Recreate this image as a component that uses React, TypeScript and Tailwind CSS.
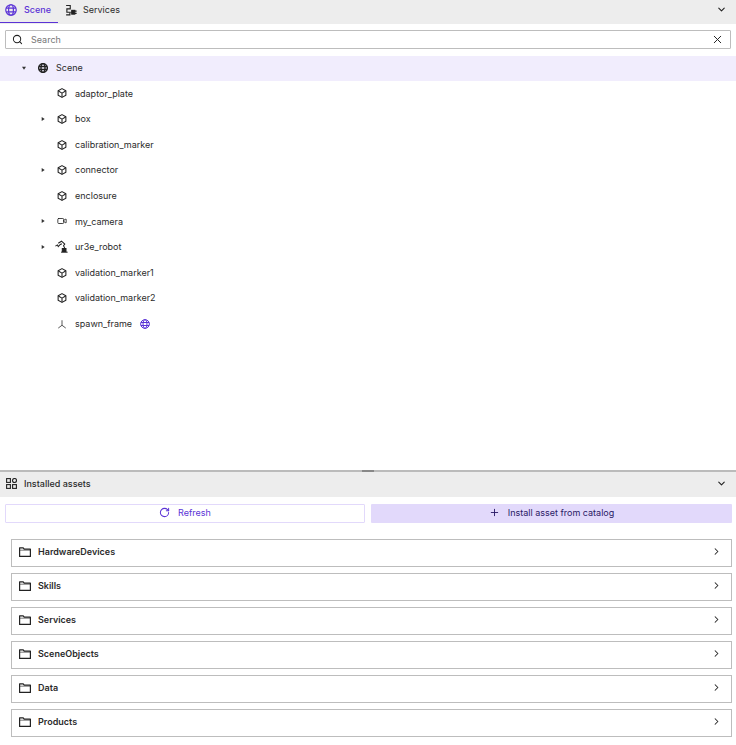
import { ChevronDown, ChevronRight, Search, X, Video, RotateCw, Plus } from "lucide-react";

type TreeRow = {
  label: string;
  icon: "box" | "camera" | "robot" | "frame";
  caret?: boolean;
  globe?: boolean;
};

const rows: TreeRow[] = [
  { label: "adaptor_plate", icon: "box" },
  { label: "box", icon: "box", caret: true },
  { label: "calibration_marker", icon: "box" },
  { label: "connector", icon: "box", caret: true },
  { label: "enclosure", icon: "box" },
  { label: "my_camera", icon: "camera", caret: true },
  { label: "ur3e_robot", icon: "robot", caret: true },
  { label: "validation_marker1", icon: "box" },
  { label: "validation_marker2", icon: "box" },
  { label: "spawn_frame", icon: "frame", globe: true },
];

const folders = ["HardwareDevices", "Skills", "Services", "SceneObjects", "Data", "Products"];

function GlobeIcon({ className, heavy }: { className?: string; heavy?: boolean }) {
  return (
    <svg viewBox="0 0 16 16" fill="none" stroke="currentColor" strokeWidth={heavy ? 2.2 : 1.6} className={className}>
      <circle cx="8" cy="8" r="7" />
      <ellipse cx="8" cy="8" rx="3.2" ry="7" />
      <path d="M1.5 5.6h13M1.5 10.4h13" />
    </svg>
  );
}

function BoxIcon() {
  return (
    <svg viewBox="0 0 16 16" fill="none" stroke="#222" strokeWidth="1.7" strokeLinejoin="round" className="h-[10px] w-[10px]">
      <path d="M8 1l6.2 3.5v7L8 15l-6.2-3.5v-7z" />
      <path d="M2.2 4.8L8 8.2l5.8-3.4M8 8.2V14.6" />
    </svg>
  );
}

function ServicesIcon() {
  return (
    <svg viewBox="0 0 16 16" fill="none" stroke="#222" strokeWidth="1.5" className="h-[12px] w-[12px]">
      <path d="M1.5 2h5.5v4.5H2.5V11h4" />
      <path d="M1.5 14.5h5V11" />
      <rect x="9" y="8.5" width="4" height="5" fill="#222" />
      <path d="M13 9.5h2.5M13 12.5h2.5M9 11H7" />
    </svg>
  );
}

function RobotIcon() {
  return (
    <svg viewBox="0 0 16 16" fill="none" stroke="#222" strokeWidth="1.3" className="ml-[-2px] h-[13px] w-[13px] shrink-0">
      <path d="M0.5 7.5l2.5-1.5 1 2 2.5-2.5 2-1" />
      <path d="M4 4l4-2.5 4 3.5-1.5 2 1.5 3" />
      <path d="M9 10.5h4.5V14H9z" fill="#222" />
      <path d="M7.5 15h8" />
    </svg>
  );
}

function FrameIcon() {
  return (
    <svg viewBox="0 0 16 16" fill="none" stroke="#333" strokeWidth="1.3" className="h-[10px] w-[10px]">
      <path d="M8 2v8M8 10l-6 4.5M8 10l6 4.5" />
    </svg>
  );
}

function AssetsIcon() {
  return (
    <svg viewBox="0 0 11 11" fill="none" stroke="#222" strokeWidth="1.1" className="h-[11px] w-[11px]">
      <rect x="0.6" y="0.6" width="3.8" height="3.8" />
      <circle cx="8.5" cy="2.5" r="2" />
      <rect x="0.6" y="6.6" width="3.8" height="3.8" />
      <rect x="6.6" y="6.6" width="3.8" height="3.8" />
    </svg>
  );
}

function FolderIcon() {
  return (
    <svg viewBox="0 0 12 10" fill="none" stroke="#222" strokeWidth="1.2" className="h-[10px] w-[12px]">
      <path d="M0.6 9.4V0.8h3.6l1 1.4h6.2v7.2z" strokeLinejoin="round" />
      <path d="M0.6 3.2h10.8" strokeWidth="0.6" />
    </svg>
  );
}

function RowIcon({ kind }: { kind: TreeRow["icon"] }) {
  if (kind === "camera") return <Video size={10} strokeWidth={2} color="#222" />;
  if (kind === "robot") return <RobotIcon />;
  if (kind === "frame") return <FrameIcon />;
  return <BoxIcon />;
}

function Caret({ open }: { open?: boolean }) {
  return (
    <svg viewBox="0 0 6 6" className="h-[4px] w-[4px] text-[#333]" fill="currentColor">
      {open ? <path d="M0 1h6L3 5.5z" /> : <path d="M1 0v6l4.5-3z" />}
    </svg>
  );
}

export default function App() {
  return (
    <div
      className="flex h-[745px] w-[736px] flex-col overflow-hidden bg-white text-[9px] text-[#2b2b2b]"
      style={{ fontFamily: "Inter, 'Noto Sans', sans-serif" }}
    >
      <div className="flex h-[24px] shrink-0 items-stretch bg-[#ededed] pb-[1px]">
        <div className="flex w-[58px] items-center gap-[7px] border-b-[1.5px] border-[#5b33d6] pb-[2px] pl-[5px] font-medium text-[#5b33d6]">
          <GlobeIcon className="h-[12px] w-[12px]" />
          <span>Scene</span>
        </div>
        <div className="ml-[7px] flex items-center gap-[6px] pb-[3px]">
          <ServicesIcon />
          <span>Services</span>
        </div>
        <div className="ml-auto flex items-center pb-[4px] pr-[9px]">
          <ChevronDown size={11} strokeWidth={2.4} color="#222" />
        </div>
      </div>

      <div className="h-[446px] shrink-0">
        <div className="px-[5px] pt-[6px]">
          <div className="flex h-[19px] items-center rounded-[1px] border border-[#bdbdbd] pl-[6px] pr-[6px]">
            <Search size={11} strokeWidth={2.2} color="#222" />
            <span className="ml-[8px] text-[#777]">Search</span>
            <X size={13} strokeWidth={1.8} color="#222" className="ml-auto" />
          </div>
        </div>

        <div className="mt-[7px] flex h-[25px] items-center bg-[#f1edfd] pb-[1px]">
          <div className="flex w-[38px] justify-end pr-[12px]">
            <Caret open />
          </div>
          <GlobeIcon heavy className="h-[10px] w-[10px] text-[#222]" />
          <span className="ml-[8px]">Scene</span>
        </div>

        <div className="pt-[0.6px]">
          {rows.map((row) => (
            <div key={row.label} className="flex h-[25.6px] items-center pb-[2px]">
              <div className="flex w-[57px] justify-end pr-[12px]">{row.caret && <Caret />}</div>
              <div className="flex w-[10px] justify-center">
                <RowIcon kind={row.icon} />
              </div>
              <span className="ml-[8px]">{row.label}</span>
              {row.globe && <GlobeIcon className="ml-[8px] h-[10px] w-[10px] text-[#5b33d6]" />}
            </div>
          ))}
        </div>
      </div>

      <div className="relative h-[2px] shrink-0 bg-[#bbbbbb]">
        <div className="absolute left-[362px] top-0 h-[2px] w-[12px] bg-[#888888]" />
      </div>

      <div className="flex h-[25px] shrink-0 items-center bg-[#ededed] pb-[2px] pl-[6px] pr-[9px]">
        <AssetsIcon />
        <span className="ml-[7px] font-medium">Installed assets</span>
        <ChevronDown size={11} strokeWidth={2.4} color="#222" className="ml-auto" />
      </div>

      <div className="flex gap-[6px] pl-[5px] pr-[4px] pt-[7px]">
        <div className="flex h-[19px] w-[360px] items-center justify-center gap-[8px] rounded-[1px] border border-[#e2d9fb] pb-[2px] text-[#5b33d6]">
          <RotateCw size={11} strokeWidth={2.2} />
          <span>Refresh</span>
        </div>
        <div className="flex h-[19px] w-[361px] items-center justify-center gap-[8px] rounded-[1px] bg-[#e2d9fb] pb-[2px] text-[#2a1a66]">
          <Plus size={11} strokeWidth={2} />
          <span>Install asset from catalog</span>
        </div>
      </div>

      <div className="flex flex-col gap-[6px] pl-[11px] pr-[4px] pt-[16px]">
        {folders.map((name) => (
          <div key={name} className="flex h-[28px] items-center border border-[#bdbdbd] pb-[3px] pl-[7px] pr-[9px]">
            <FolderIcon />
            <span className="ml-[7px] font-semibold">{name}</span>
            <ChevronRight size={11} strokeWidth={2.2} color="#222" className="ml-auto" />
          </div>
        ))}
      </div>
    </div>
  );
}
